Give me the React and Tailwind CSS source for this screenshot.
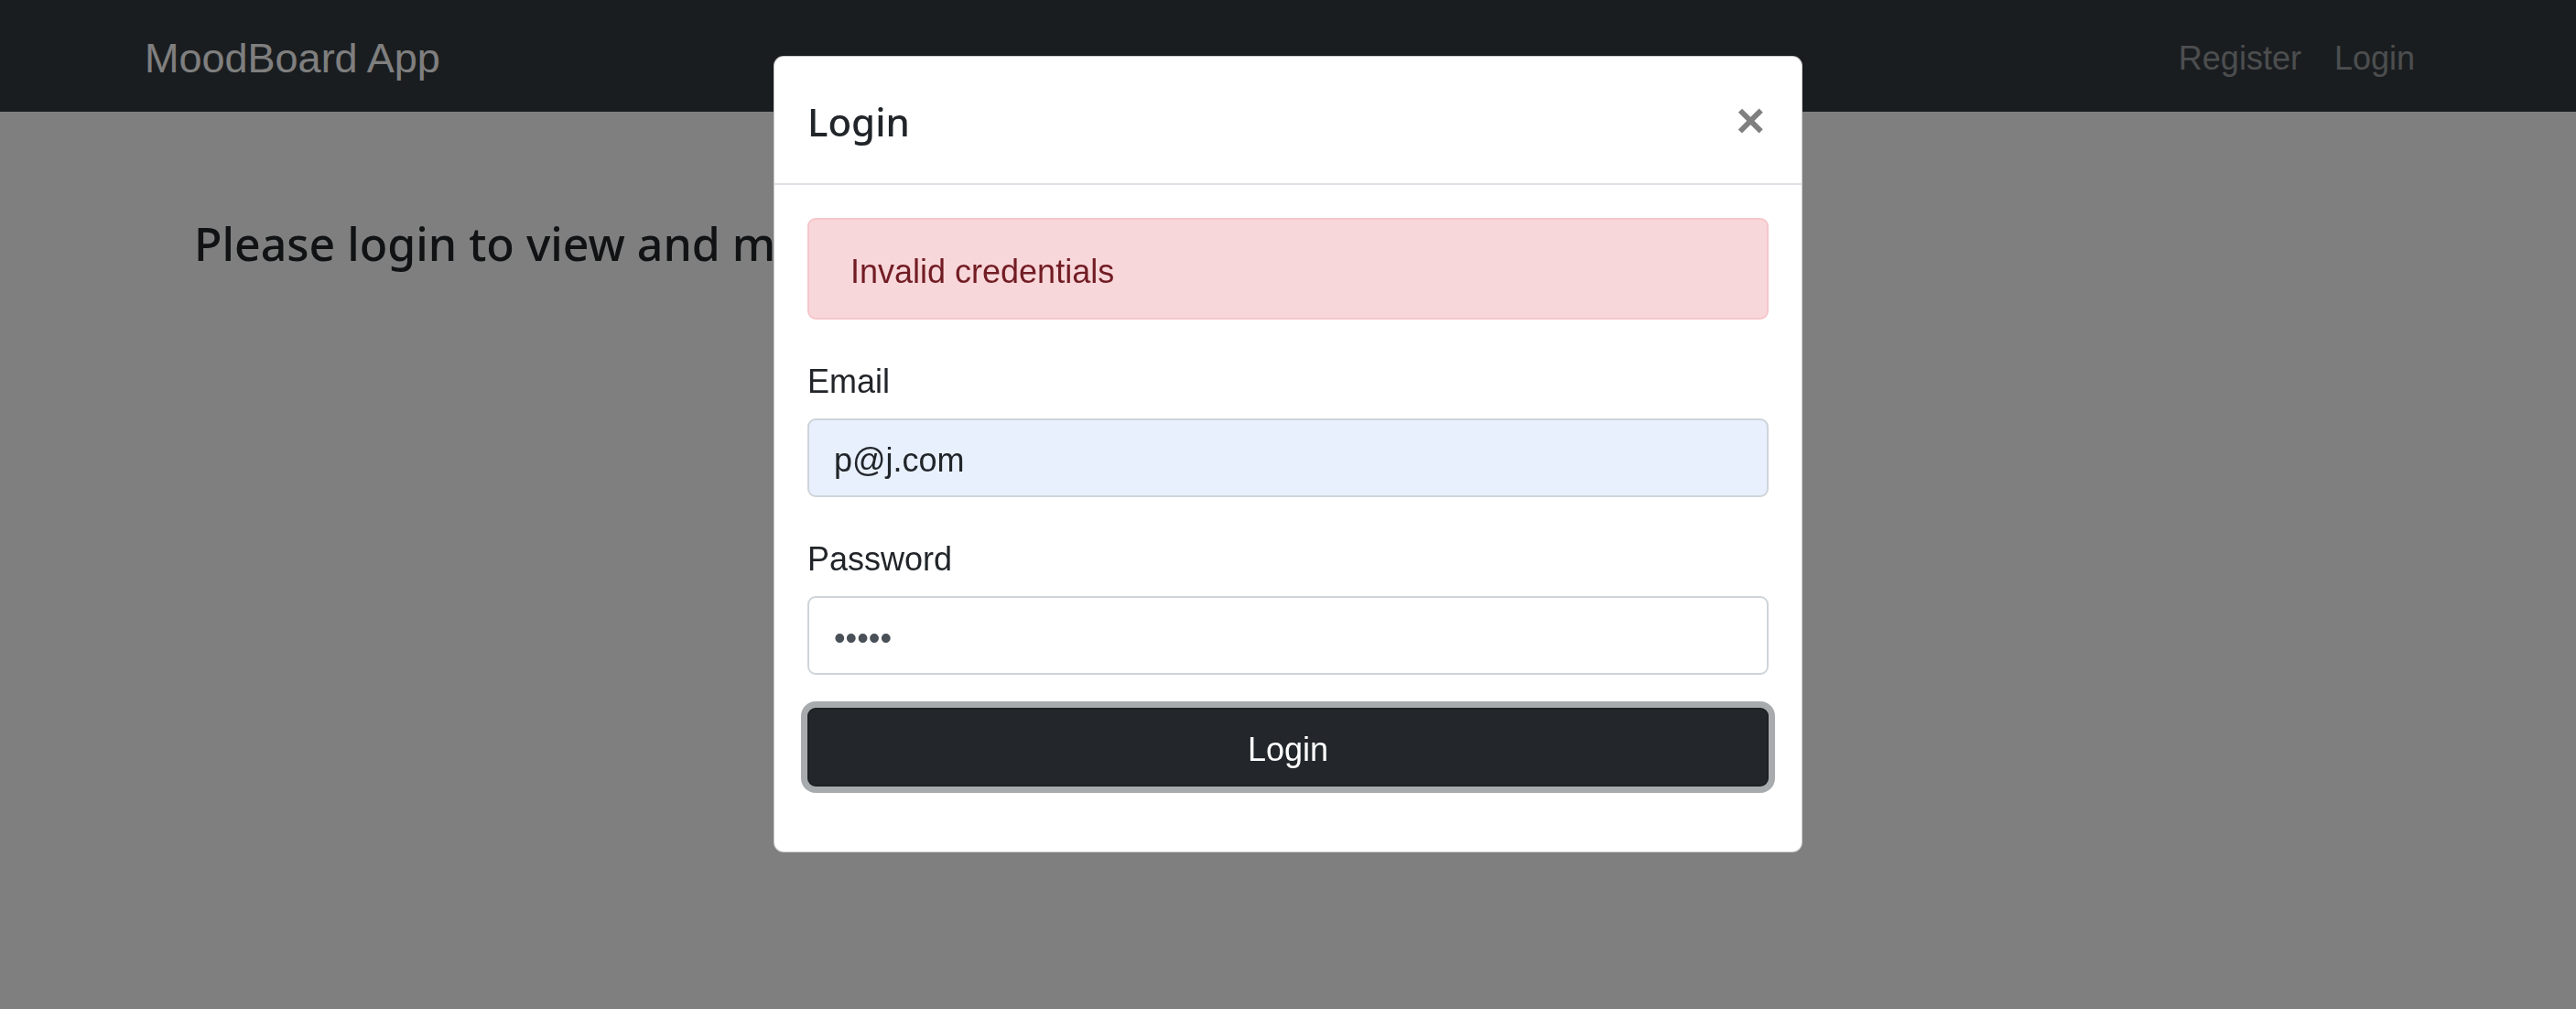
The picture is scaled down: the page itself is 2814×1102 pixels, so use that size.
import React, { useState } from 'react';

const font = { fontFamily: '"Liberation Sans", Arial, sans-serif' };
const headFont = { fontFamily: '"Noto Sans", "Liberation Sans", sans-serif' };

const LoginModal = ({ email, setEmail, password, setPassword }) => {
  return (
    <div className="fixed inset-0 flex justify-center pt-[61px]">
      <div className="w-[1124px] h-[870px] bg-white border border-black/20 rounded-[11px] flex flex-col">
        {/* header */}
        <div className="h-[140px] flex items-center justify-between px-[36px] border-b-2 border-[#dee2e6]">
          <h5 className="text-[42px] leading-[1.5] font-medium text-[#212529] pt-[2px]" style={headFont}>Login</h5>
          <button className="text-[54px] leading-none font-bold text-black/50 mr-[4px]">×</button>
        </div>
        {/* body */}
        <div className="px-[36px] pt-[36px]">
          <div className="h-[111px] flex items-center px-[45px] pt-[6px] bg-[#f8d7da] border-2 border-[#f5c6cb] rounded-[9px] text-[36px] text-[#721c24]">
            Invalid credentials
          </div>
          <div className="mt-[36px]">
            <label className="block text-[36px] leading-[54px] text-[#212529] pt-[5px] mb-[13px]">Email</label>
            <input
              type="email"
              value={email}
              onChange={(e) => setEmail(e.target.value)}
              className="w-full h-[86px] px-[27px] pt-[6px] bg-[#e8f0fe] border-2 border-[#ced4da] rounded-[9px] text-[36px] text-[#212529] outline-none"
              style={font}
            />
          </div>
          <div className="mt-[36px]">
            <label className="block text-[36px] leading-[54px] text-[#212529] pt-[5px] mb-[13px]">Password</label>
            <input
              type="password"
              value={password}
              onChange={(e) => setPassword(e.target.value)}
              className="w-full h-[86px] px-[27px] pt-[6px] bg-white border-2 border-[#ced4da] rounded-[9px] text-[36px] text-[#495057] outline-none"
              style={font}
            />
          </div>
          <button className="mt-[36px] w-full h-[86px] pt-[5px] bg-[#23272b] border-2 border-[#1d2124] rounded-[9px] text-[36px] text-white ring-[7px] ring-[#52585d]/50">
            Login
          </button>
        </div>
      </div>
    </div>
  );
};

const App = () => {
  const [email, setEmail] = useState('p@j.com');
  const [password, setPassword] = useState('12345');

  return (
    <div className="relative h-[1102px] bg-white overflow-hidden" style={font}>
      <nav className="h-[122px] bg-[#343a40] px-[158px] pt-[6px] flex items-center justify-between">
        <span className="text-[45px] text-white">MoodBoard App</span>
        <div className="flex items-center gap-[36px] pr-[18px]">
          <a className="text-[36px] text-white/50">Register</a>
          <a className="text-[36px] text-white/50">Login</a>
        </div>
      </nav>
      <div className="ml-[212px] mt-[114px]">
        <h4 className="text-[50px] leading-[1.2] font-medium text-[#212529] whitespace-nowrap" style={headFont}>
          Please login to view and manage your mood boards.
        </h4>
      </div>

      {/* backdrop */}
      <div className="fixed inset-0 bg-black/50" />

      <LoginModal email={email} setEmail={setEmail} password={password} setPassword={setPassword} />
    </div>
  );
};

export default App;
